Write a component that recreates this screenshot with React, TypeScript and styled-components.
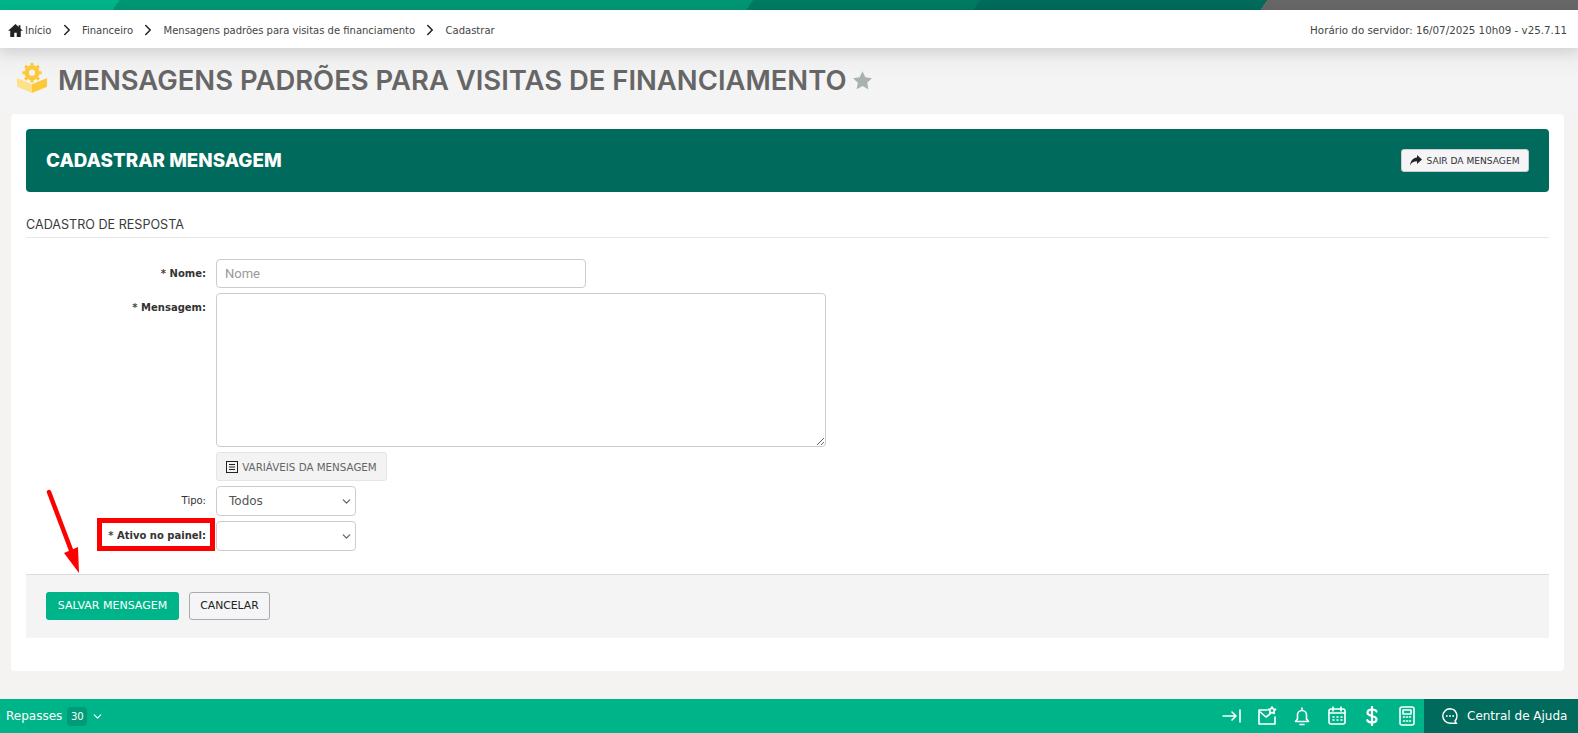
import styled, { createGlobalStyle } from 'styled-components'
import { ChevronDown, ChevronRight } from 'lucide-react'

const Global = createGlobalStyle`
  html, body { margin: 0; padding: 0; height: 100%; }
  body {
    background: #f5f3f1;
    font-family: "DejaVu Sans", Verdana, sans-serif;
    color: #333;
    overflow: hidden;
  }
  * { box-sizing: border-box; }
`

const Page = styled.div`
  height: 733px;
  display: flex;
  flex-direction: column;
`

const Stripe = styled.div`
  height: 10px;
  flex: none;
  background: linear-gradient(
    125deg,
    #00b48a 0,
    #00b48a 98px,
    #009674 98px,
    #009674 617px,
    #007a62 617px,
    #007a62 803px,
    #006b5c 803px,
    #006b5c 1038px,
    #676767 1038px
  );
`

const Crumbs = styled.div`
  height: 38px;
  flex: none;
  background: #fff;
  display: flex;
  align-items: center;
  justify-content: space-between;
  padding: 2px 11px 0 8px;
  font-size: 10px;
  color: #444;
  position: relative;
  box-shadow: 0 4px 14px rgba(0, 0, 0, 0.12);
`

const CrumbList = styled.div`
  display: flex;
  align-items: center;
`

const CrumbText = styled.span`
  white-space: nowrap;
`

const ServerTime = styled.span`
  white-space: nowrap;
  font-size: 10.3px;
`

const CrumbSep = styled.span`
  display: flex;
  width: 30.5px;
  justify-content: center;
  color: #222;
`

const HomeIcon = styled.svg`
  width: 15px;
  height: 13px;
  margin-right: 2px;
  fill: #222;
`

const TitleRow = styled.div`
  height: 66px;
  flex: none;
  display: flex;
  align-items: center;
  padding: 0 0 1px 17px;
  background: linear-gradient(#ececec, #f4f4f4 30px);
`

const TitleIcon = styled.svg`
  width: 30px;
  height: 30px;
  margin-bottom: 5px;
`

const TitleText = styled.h1`
  margin: 0 5px 2px 11px;
  font-family: Inter, sans-serif;
  font-size: 27.45px;
  font-weight: 600;
  color: #666;
  white-space: nowrap;
`

const Card = styled.main`
  margin: 0 14px 0 11px;
  height: 557px;
  flex: none;
  background: #fff;
  border-radius: 4px;
  padding: 15px;
  display: flex;
  flex-direction: column;
`

const Banner = styled.div`
  height: 63px;
  flex: none;
  border-radius: 4px;
  background: #006b5c;
  display: flex;
  align-items: center;
  justify-content: space-between;
  padding: 0 20px;
`

const BannerTitle = styled.h2`
  margin: 0;
  font-family: Inter, sans-serif;
  font-size: 18.8px;
  font-weight: 800;
  color: #fff;
`

const ExitButton = styled.button`
  height: 23px;
  width: 128px;
  border: 1px solid #ccc;
  border-radius: 3px;
  background: #f5f5f7;
  font-family: inherit;
  font-size: 9.1px;
  color: #333;
  display: flex;
  align-items: center;
  justify-content: center;
  gap: 4px;
  padding: 0;
  white-space: nowrap;
`

const SectionTitle = styled.div`
  margin-top: 25px;
  height: 21px;
  flex: none;
  border-bottom: 1px solid #e8e8e8;
  font-family: Inter, sans-serif;
  font-size: 12.6px;
  color: #3a3a3a;
`

const Form = styled.div`
  display: grid;
  grid-template-columns: 180px auto;
  column-gap: 10px;
  row-gap: 5px;
  justify-content: start;
  align-items: start;
  margin: 21px 0 23px;
`

const Label = styled.label<{ $bold?: boolean }>`
  font-size: 10px;
  font-weight: ${p => (p.$bold ? 700 : 400)};
  color: #333;
  text-align: right;
  white-space: nowrap;
  align-self: start;
  padding-top: 9px;
  position: relative;
`

const Star = styled.span`
  color: #444;
`

const HighlightBox = styled.span`
  position: absolute;
  left: 71px;
  right: -9px;
  top: -3px;
  height: 33px;
  border: 5px solid #ff0000;
`

const TextInput = styled.input`
  width: 370px;
  height: 29px;
  border: 1px solid #ccc;
  border-radius: 4px;
  padding: 0 8px;
  font-family: Roboto, sans-serif;
  font-size: 13px;
  background: #fff;
  &::placeholder { color: #999; }
`

const TextArea = styled.textarea`
  display: block;
  width: 610px;
  height: 154px;
  border: 1px solid #ccc;
  border-radius: 4px;
`

const VarButton = styled.button`
  display: flex;
  align-items: center;
  gap: 4px;
  margin-top: 5px;
  height: 29px;
  width: 171px;
  justify-content: center;
  padding: 0;
  border: 1px solid #e5e5e5;
  border-radius: 3px;
  background: #f3f3f3;
  font-family: inherit;
  font-size: 10.3px;
  color: #666;
  white-space: nowrap;
`

const SelectBox = styled.div`
  width: 140px;
  height: 30px;
  border: 1px solid #ccc;
  border-radius: 4px;
  background: #fff;
  display: flex;
  align-items: center;
  justify-content: space-between;
  padding: 0 2px 0 12px;
  font-size: 12px;
  color: #555;
`

const Actions = styled.div`
  height: 64px;
  flex: none;
  background: #f4f4f4;
  border-top: 1px solid #ddd;
  display: flex;
  align-items: center;
  gap: 10px;
  padding: 0 20px 2px;
`

const PrimaryButton = styled.button`
  width: 133px;
  height: 28px;
  border: none;
  border-radius: 3px;
  background: #00b48a;
  color: #fff;
  font-family: inherit;
  font-size: 11px;
  padding: 0;
`

const CancelButton = styled.button`
  width: 81px;
  height: 28px;
  border: 1px solid #aaa;
  border-radius: 3px;
  background: #f5f5f7;
  color: #222;
  font-family: inherit;
  font-size: 10.8px;
  padding: 0;
`

const Arrow = styled.svg`
  position: absolute;
  left: 40px;
  top: 485px;
  width: 50px;
  height: 90px;
`

const Spacer = styled.div`
  flex: 1;
`

const Footer = styled.footer`
  height: 34px;
  flex: none;
  background: #00b48a;
  display: flex;
  align-items: center;
  color: #fff;
  font-size: 12px;
  padding-left: 6px;
`

const Badge = styled.span`
  margin-left: 5px;
  width: 20px;
  height: 19px;
  border-radius: 4px;
  background: #009c78;
  display: flex;
  align-items: center;
  justify-content: center;
  font-size: 10px;
`

const FooterChevron = styled(ChevronDown)`
  margin-left: 4px;
`

const FooterSpacer = styled.div`
  flex: 1;
`

const FooterIcons = styled.div`
  display: flex;
  align-items: center;
  gap: 15px;
  margin-right: 7px;
`

const FooterIcon = styled.svg<{ $heavy?: boolean }>`
  width: 20px;
  height: 20px;
  fill: none;
  stroke: #fff;
  stroke-width: ${p => (p.$heavy ? 2.2 : 1.6)};
  stroke-linecap: round;
  stroke-linejoin: round;
`

const Help = styled.div`
  width: 154px;
  height: 34px;
  background: #006b5c;
  display: flex;
  align-items: center;
  gap: 8px;
  padding-left: 17px;
  font-size: 12px;
  white-space: nowrap;
`

export default function App() {
  return (
    <Page>
      <Global />
      <Stripe />
      <Crumbs>
        <CrumbList>
          <HomeIcon viewBox="0 0 24 21">
            <path d="M12 0 0 11h3.5v10H10v-7h4v7h6.5V11H24l-4-3.6V2h-3v2.7z" />
          </HomeIcon>
          <CrumbText>Início</CrumbText>
          <CrumbSep><ChevronRight size={18} strokeWidth={2} /></CrumbSep>
          <CrumbText>Financeiro</CrumbText>
          <CrumbSep><ChevronRight size={18} strokeWidth={2} /></CrumbSep>
          <CrumbText>Mensagens padrões para visitas de financiamento</CrumbText>
          <CrumbSep><ChevronRight size={18} strokeWidth={2} /></CrumbSep>
          <CrumbText>Cadastrar</CrumbText>
        </CrumbList>
        <ServerTime>Horário do servidor: 16/07/2025 10h09 - v25.7.11</ServerTime>
      </Crumbs>

      <TitleRow>
        <TitleIcon viewBox="0 0 34 34">
          <path d="M0 17 17 24v10L0 27z" fill="#fde08a" />
          <path d="M17 24 34 17v10L17 34z" fill="#fdc93a" />
          <circle cx="17" cy="11" r="6" fill="none" stroke="#fdc93a" strokeWidth="5" />
          <path d="M17 0v4M17 18v4M6 11h4M24 11h4M9.2 3.2l2.8 2.8M24.8 3.2 22 6M9.2 18.800 12 16M24.8 18.800 22 16" stroke="#fdc93a" strokeWidth="3.5" />
        </TitleIcon>
        <TitleText>MENSAGENS PADRÕES PARA VISITAS DE FINANCIAMENTO</TitleText>
        <svg width="21" height="21" viewBox="0 0 24 24" fill="#aab2b0">
          <path d="M12 1.5l3.3 6.9 7.5 1-5.5 5.2 1.4 7.5L12 18.4l-6.7 3.7 1.4-7.5L1.2 9.4l7.5-1z" />
        </svg>
      </TitleRow>

      <Card>
        <Banner>
          <BannerTitle>CADASTRAR MENSAGEM</BannerTitle>
          <ExitButton>
            <svg width="12" height="11" viewBox="0 0 24 22" fill="#222">
              <path d="M14 0l10 9-10 9v-5.5C7 12.5 3 15 0 21 1 12 6 6 14 5z" />
            </svg>
            SAIR DA MENSAGEM
          </ExitButton>
        </Banner>
        <SectionTitle>CADASTRO DE RESPOSTA</SectionTitle>
        <Form>
          <Label $bold><Star>* </Star>Nome:</Label>
          <TextInput placeholder="Nome" />
          <Label $bold><Star>* </Star>Mensagem:</Label>
          <div>
            <TextArea />
            <VarButton>
              <svg width="12" height="12" viewBox="0 0 12 12">
                <rect x="0.5" y="0.5" width="11" height="11" fill="none" stroke="#222" />
                <path d="M3 3.5h6M3 6h6M3 8.5h6" stroke="#222" />
              </svg>
              VARIÁVEIS DA MENSAGEM
            </VarButton>
          </div>
          <Label>Tipo:</Label>
          <SelectBox>Todos<ChevronDown size={13} strokeWidth={2.5} color="#666" /></SelectBox>
          <Label $bold>
            <Star>* </Star>Ativo no painel:
            <HighlightBox />
          </Label>
          <SelectBox><span /><ChevronDown size={13} strokeWidth={2.5} color="#666" /></SelectBox>
        </Form>
        <Actions>
          <PrimaryButton>SALVAR MENSAGEM</PrimaryButton>
          <CancelButton>CANCELAR</CancelButton>
        </Actions>
      </Card>
      <Arrow viewBox="0 0 50 90">
        <path d="M9 7 31 65" stroke="#ff0000" strokeWidth="4.5" strokeLinecap="round" />
        <path d="M24 68 38 62 39 88z" fill="#ff0000" />
      </Arrow>
      <Spacer />

      <Footer>
        Repasses
        <Badge>30</Badge>
        <FooterChevron size={13} />
        <FooterSpacer />
        <FooterIcons>
          <FooterIcon viewBox="0 0 20 20"><path d="M1 10h13M10 6l4 4-4 4M18 4v12" /></FooterIcon>
          <FooterIcon viewBox="0 0 20 20">
            <path d="M10 4H2v14h16v-7M2 5l7 6 4-3" />
            <path d="M15 1l1.2 2 2.3.4-1.6 1.7.3 2.4-2.2-1-2.2 1 .3-2.4-1.6-1.7 2.3-.4z" />
          </FooterIcon>
          <FooterIcon viewBox="0 0 20 20">
            <path d="M5.5 13V9a4.5 4.5 0 019 0v4l2 2.5h-13zM8 18.500h4M10 2v2" />
          </FooterIcon>
          <FooterIcon viewBox="0 0 20 20">
            <rect x="2" y="3" width="16" height="15" rx="2" />
            <path d="M2 7h16M6 1v4M14 1v4M6 11h1M10 11h1M14 11h1M6 14h1M10 14h1M14 14h1" />
          </FooterIcon>
          <FooterIcon $heavy viewBox="0 0 20 20">
            <path d="M14.5 5.5C14 4 12 3.5 10 3.5c-2.5 0-4.5 1-4.5 3.2C5.5 11 14.5 9 14.5 13.300c0 2.2-2 3.2-4.5 3.2-2.2 0-4-.7-4.7-2.3M10 1v18" />
          </FooterIcon>
          <FooterIcon viewBox="0 0 20 20">
            <rect x="3" y="1" width="14" height="18" rx="2" />
            <rect x="6" y="4" width="8" height="4" />
            <path d="M6.5 11h1M12.5 11h1M6.5 15h1M12.5 15h1M9.5 11h1M9.5 15h1" />
          </FooterIcon>
        </FooterIcons>
        <Help>
          <svg width="18" height="18" viewBox="0 0 20 20" fill="none" stroke="#fff" strokeWidth="1.6">
            <path d="M10 2a8 8 0 100 16h7l-1.5-2.5A8 8 0 0010 2z" />
            <circle cx="6.5" cy="10" r="1" fill="#fff" stroke="none" />
            <circle cx="10" cy="10" r="1" fill="#fff" stroke="none" />
            <circle cx="13.5" cy="10" r="1" fill="#fff" stroke="none" />
          </svg>
          Central de Ajuda
        </Help>
      </Footer>
    </Page>
  )
}
